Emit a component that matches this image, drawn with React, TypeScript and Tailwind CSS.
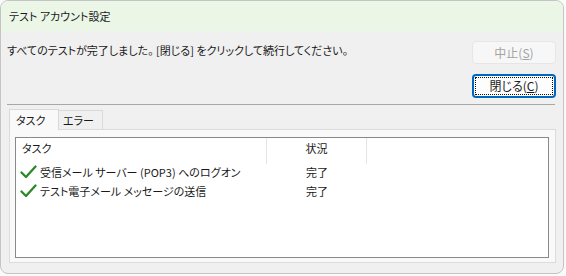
import { ReactNode } from 'react';

const FONT = "font-['Yu_Gothic_UI','Noto_Sans_CJK_JP',sans-serif] [font-feature-settings:'palt']";

function Check() {
    return (
        <svg width="17" height="14" viewBox="0 0 17 14" className="shrink-0">
            <path d="M1.5 7.5 L6 12 L15.5 1.5" fill="none" stroke="#2a8a2a" strokeWidth="2.3" strokeLinecap="round" strokeLinejoin="round" />
        </svg>
    );
}

function Row({ task, status }: { task: string; status: string }) {
    return (
        <div className="flex h-[19px] items-center">
            <div className="flex w-[251px] items-center gap-[3px] pl-[4px]">
                <Check />
                <span>{task}</span>
            </div>
            <div className="w-[100px] text-center">{status}</div>
        </div>
    );
}

function Tab({ active, children }: { active?: boolean; children: ReactNode }) {
    return active ? (
        <div className="relative z-10 -mb-px flex h-[21px] w-[50px] items-center border border-b-0 border-[#d9d9d9] bg-[#f9f9f9] pl-[6px]">
            {children}
        </div>
    ) : (
        <div className="flex h-[19px] w-[44px] items-center border border-l-0 border-b-0 border-[#d9d9d9] bg-[#f0f0f0] pl-[4px]">
            {children}
        </div>
    );
}

export default function App() {
    return (
        <div className={`h-[276px] w-[566px] overflow-hidden bg-[#fafafa] text-[11px] leading-[16px] text-[#1a1a1a] ${FONT}`}>
            <div className="flex h-[274px] w-[564px] flex-col overflow-hidden rounded-[8px] border border-[#c4c4c4] bg-[#f0f0f0]">
                <div className="flex h-[30px] shrink-0 items-center bg-[#ebf6e7] pl-[8px]">テスト アカウント設定</div>

                <div className="flex pl-[6px] pr-[7px]">
                    <p className="flex-1 pt-[11px]">すべてのテストが完了しました。&nbsp;[閉じる] をクリックして続行してください。</p>
                    <div className="flex w-[84px] flex-col gap-[10px] pt-[10px]">
                        <button type="button" disabled className="h-[23px] rounded-[4px] border border-[#e6e6e6] bg-[#f7f7f7] text-[12px] text-[#a3a3a3]">
                            中止(<span className="underline">S</span>)
                        </button>
                        <button type="button" className="h-[24px] rounded-[4px] border-2 border-[#0067c0] bg-[#fdfdfd] p-[1px] text-[12px]">
                            <div className="flex h-full items-center justify-center border border-dotted border-[#111]">
                                閉じる(<span className="underline">C</span>)
                            </div>
                        </button>
                    </div>
                </div>

                <div className="ml-[6px] mr-[8px] mt-[6px] h-px bg-[#a8a8a8]" />

                <div className="mt-[4px] flex items-end pl-[8px]">
                    <Tab active>タスク</Tab>
                    <Tab>エラー</Tab>
                </div>
                <div className="ml-[8px] mr-[7px] h-[134px] border border-[#dcdcdc] bg-[#f9f9f9] pb-[4px] pl-[5px] pr-[6px] pt-[7px]">
                    <div className="h-full border border-[#858990] bg-white">
                        <div className="flex h-[26px]">
                            <div className="w-[251px] border-r border-[#e5e5e5] pl-[6px] pt-[2px]">タスク</div>
                            <div className="w-[100px] border-r border-[#e5e5e5] pt-[2px] text-center">状況</div>
                        </div>
                        <div className="-mt-[2px]">
                            <Row task="受信メール サーバー (POP3) へのログオン" status="完了" />
                            <Row task="テスト電子メール メッセージの送信" status="完了" />
                        </div>
                    </div>
                </div>
            </div>
        </div>
    );
}
